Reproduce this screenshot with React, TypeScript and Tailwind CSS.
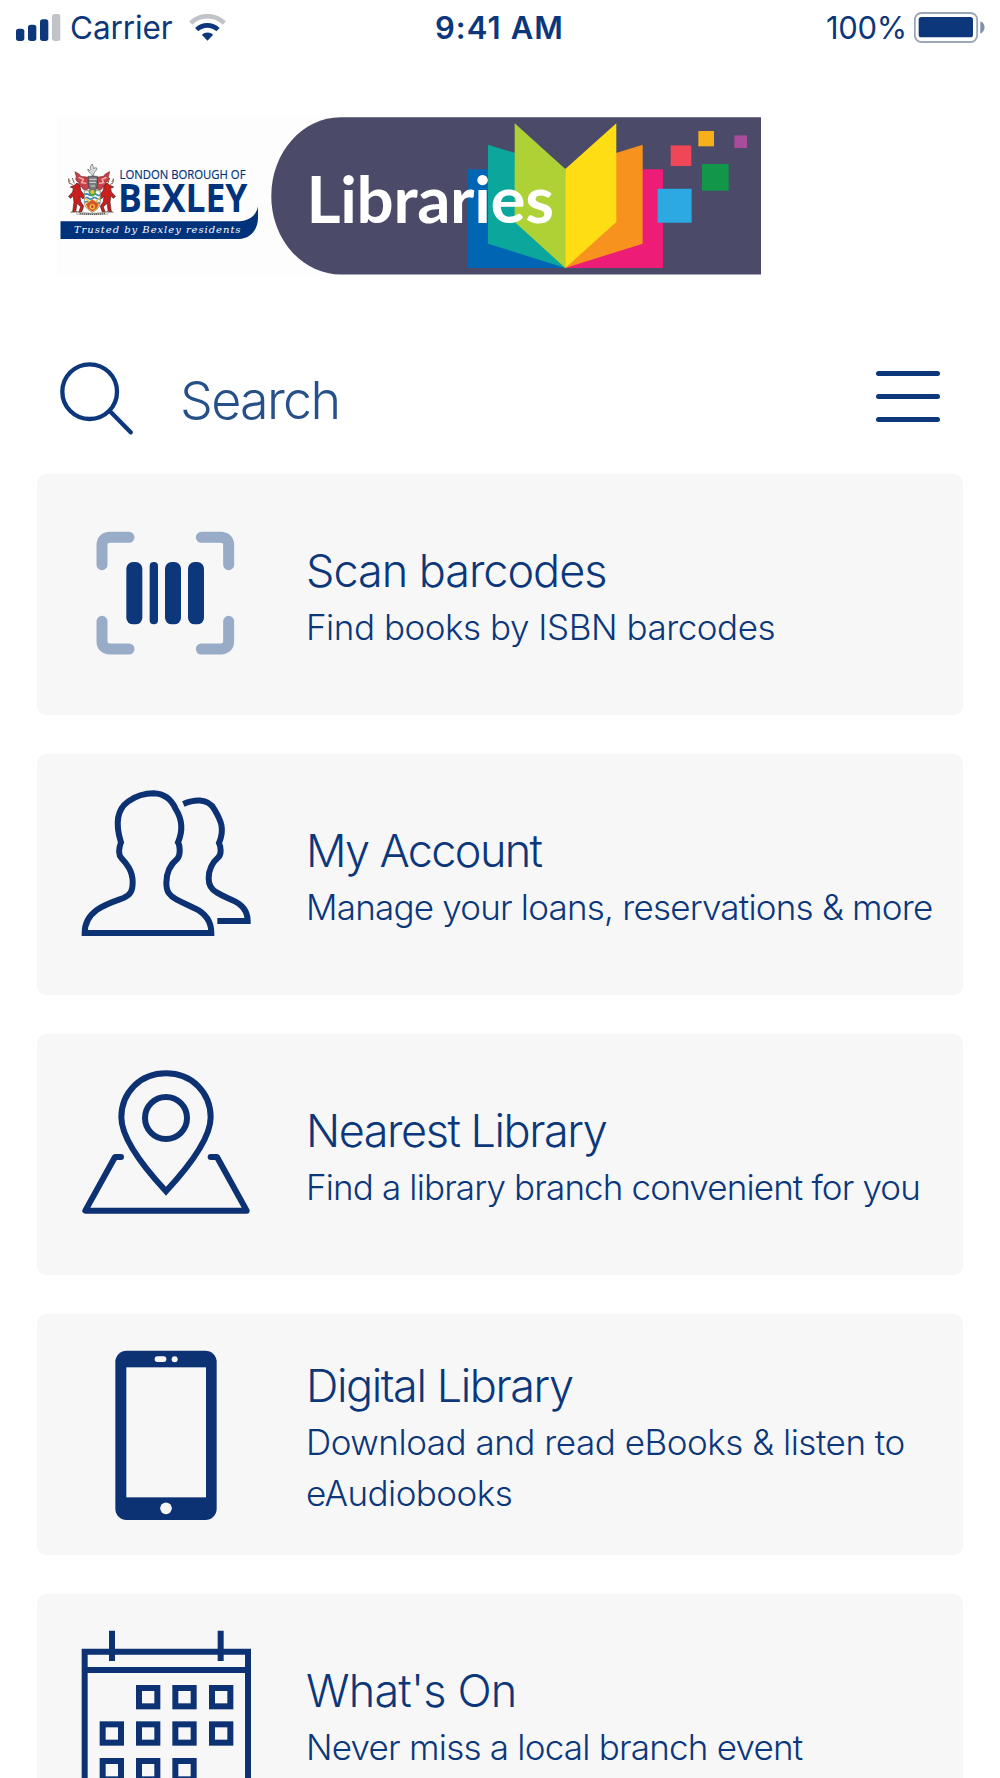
import type { ReactNode } from "react";

const NAVY = "#0c3274";

function SignalIcon() {
  return (
    <svg className="h-[27px] w-[45px]" viewBox="48 40 135 81" fill="#0c377b">
      <rect x="48" y="84" width="25" height="37" rx="8" />
      <rect x="84" y="72" width="25" height="49" rx="8" />
      <rect x="120" y="56" width="25" height="65" rx="8" />
      <rect x="156" y="40" width="25" height="81" rx="8" fill="#c0c4c9" />
    </svg>
  );
}

function WifiIcon() {
  return (
    <svg className="h-[27px] w-[37px]" viewBox="565 41 111 81" fill="none" strokeWidth="14">
      <path d="M570 68a73 73 0 0 1 101 0" stroke="#c0c4c9" />
      <path d="M588 88a46 46 0 0 1 64 0" stroke="#0c377b" />
      <path d="M620.500 121L603.500 103.500a24 24 0 0 1 34 0Z" fill="#0c377b" />
    </svg>
  );
}

function BatteryIcon() {
  return (
    <svg className="h-[31px] w-[71px]" viewBox="1243 36 213 93">
      <rect x="1245.500" y="39" width="187" height="87" rx="20" fill="none" stroke="#9ba6b8" strokeWidth="5.500" />
      <rect x="1257" y="51" width="163" height="61" rx="8" fill="#0c377b" />
      <path d="M1442 64c17 7 17 30 0 37Z" fill="#8491a8" />
    </svg>
  );
}

function StatusBar() {
  return (
    <header className="grid h-[54px] shrink-0 grid-cols-3 items-center pr-[15px] pl-4 font-['Inter',sans-serif] text-[31.500px] leading-[44px]">
      <div className="flex items-center">
        <SignalIcon />
        <span className="mt-[2px] ml-[9px] tracking-[-0.1px]">Carrier</span>
        <span className="ml-[16px]">
          <WifiIcon />
        </span>
      </div>
      <div className="mt-px pr-[2px] text-center text-[31px] font-semibold tracking-[1.1px]">9:41 AM</div>
      <div className="flex items-center justify-end">
        <span className="mt-px mr-[7px] text-[31px] tracking-[-0.3px]">100%</span>
        <BatteryIcon />
      </div>
    </header>
  );
}

function Crest() {
  return (
    <g transform="translate(40 100) scale(.33333)">
      {/* plume and helmet */}
      <path d="M157 228c-3-12-15-10-13-21 4 6 7 5 9 1-5-6 0-12 4-16 0 6 6 8 4 14 4-2 6-4 10-1-1 9-11 9-10 23Z" fill="#d9dadb" stroke="#55585c" strokeWidth="2" />
      {/* mantling */}
      <path d="M145 232c-14-3-22 1-27-9l-13-8 4 15c-5 8 2 17 9 17-6 7-1 14 8 13 0 9 9 11 20 6Zm26 0c14-3 19 1 24-9l14-8-4 15c5 8-2 17-9 17 6 7 1 14-8 13 0 9-9 11-19 6Z" fill="#c9414a" stroke="#712329" strokeWidth="2" />
      <path d="M116 232l14 6-5 10 14 2M200 232l-14 6 5 10-14 2" fill="none" stroke="#f2b8ae" strokeWidth="4" />
      <path d="M145 229h27v25l-5 17h-17l-5-17Z" fill="#77797d" stroke="#38393b" strokeWidth="2" />
      <path d="M148 238h22M149 247h19M152 258h13" stroke="#d8d9da" strokeWidth="3" />
      {/* supporters */}
      <path d="M103 256l8-7 9 9 2 13 12 16-5 10-9-8 2 16 9 14-6 17h-8l5-16-11-10-4 26h-9l4-29-2-19-9 7-5-6 12-13 2-11-9-4Z" fill="#c9201f" stroke="#48191a" strokeWidth="2" />
      <path d="M209 256l-8-7-9 9-2 13-12 16 5 10 9-8-2 16-9 14 6 17h8l-5-16 11-10 4 26h9l-4-29 2-19 9 7 5-6-12-13-2-11 9-4Z" fill="#c9201f" stroke="#48191a" strokeWidth="2" />
      <path d="M98 254l-11-5-1-14m5 9l-6-4m18 10l-6-16m112 20l10-5 1-14m-5 9l6-4m-17 10l5-16" fill="none" stroke="#75604a" strokeWidth="3" />
      <path d="M92 337l14-3 13 3m75 0l14-3 12 3" stroke="#7a4a35" strokeWidth="3" fill="none" />
      {/* shield */}
      <path d="M133 272h48v32c0 18-12 26-24 33-12-7-24-15-24-33Z" fill="#f8f8f4" stroke="#6b6046" strokeWidth="2" />
      <path d="M134 284q6-5 12 0t12 0 12 0 10 0M134 295q6-5 12 0t12 0 12 0 10 0M135 307q6-5 12 0t12 0 12 0 8 0" fill="none" stroke="#3387c0" strokeWidth="5" />
      <path d="M145 272h24l-4 13-8 5-9-5Z" fill="#4fa546" />
      <circle cx="157" cy="276" r="6" fill="#edc03b" />
      <path d="M135 293l22 22 22-22" fill="none" stroke="#eac349" strokeWidth="4" />
      <path d="M137 312l20-14 20 14-6 14-14 9-14-9Z" fill="#d6562c" stroke="#eac349" strokeWidth="2" />
      <circle cx="157" cy="320" r="6" fill="#d6372c" stroke="#f1c545" strokeWidth="4" />
      {/* motto scroll */}
      <path d="M108 333l3 10q46-6 92 0l3-10M115 336q42 9 84 0" fill="none" stroke="#8b8b87" strokeWidth="2" />
      <path d="M119 341q38 4 77 0" fill="none" stroke="#4d4d4b" strokeWidth="4" strokeDasharray="4 2" />
    </g>
  );
}

function Logo() {
  return (
    <svg className="h-[158px] w-[704px]" viewBox="57 117 704 158" aria-label="London Borough of Bexley Libraries">
      <rect x="57" y="117" width="704" height="157.500" fill="#fdfdfd" />
      <Crest />
      <g fill="#00337c">
        <text x="119.500" y="178.700" className="font-['Open_Sans',sans-serif] text-[13.400px]" textLength="126" lengthAdjust="spacingAndGlyphs" stroke="#00337c" strokeWidth=".2">
          LONDON BOROUGH OF
        </text>
        <text x="118" y="211.800" className="font-['Open_Sans',sans-serif] text-[39.500px] font-bold" textLength="129.500" lengthAdjust="spacingAndGlyphs">
          BEXLEY
        </text>
        <path d="M60.500 221.200H239C250 221 256.500 214.500 258 206.500V217.500C258 230 250 239 239 239H60.500Z" />
      </g>
      <text x="74" y="233.300" fill="#fff" className="font-['DejaVu_Serif',serif] text-[10px] italic" textLength="166.500">
        Trusted by Bexley residents
      </text>
      <path d="M341 117.300H761V274.500H341C302 274.500 271.300 239 271.300 195.900S302 117.300 341 117.300Z" fill="#4b4a68" />
      <g transform="translate(400 100) scale(.33333)">
        <path d="M203 208H496V504H203Z" fill="#0065b3" />
        <path d="M496 208H789V504H496Z" fill="#ed1c76" />
        <path d="M264 134L496 206V504L264 431Z" fill="#0ba79d" />
        <path d="M728 134L496 206V504L728 431Z" fill="#f7921e" />
        <path d="M344 70V366L496 504V207Z" fill="#aed136" />
        <path d="M649 70L496 207V504L649 366Z" fill="#ffdd15" />
        <path d="M812 136h62v62h-62Z" fill="#ef4758" />
        <path d="M895 93h47v46h-47Z" fill="#f8b01a" />
        <path d="M1003 106h38v38h-38Z" fill="#a84c9b" />
        <path d="M906 192h80v80h-80Z" fill="#11964a" />
        <path d="M773 266h102v102H773Z" fill="#2da9e2" />
      </g>
      <text x="306.500" y="222.500" fill="#fff" className="font-['Lato',sans-serif] text-[65.500px] font-bold" textLength="247.500">
        Libraries
      </text>
    </svg>
  );
}

function SearchIcon() {
  return (
    <svg className="size-[73px]" viewBox="90 65 219 219" fill="none" stroke="#0c377b" strokeWidth="13" strokeLinecap="round">
      <circle cx="179" cy="154" r="82" />
      <path d="M240 213l62 63" />
    </svg>
  );
}

function BarcodeIcon() {
  return (
    <svg className="size-[170px]" viewBox="63 27 510 510">
      <path
        d="M126 194V137Q126 112 151 112H207M424 112H481Q506 112 506 137V194M506 364V422Q506 447 481 447H424M207 447H151Q126 447 126 422V364"
        fill="none"
        stroke="#98abc7"
        strokeWidth="33"
        strokeLinecap="round"
      />
      <g fill="#0c377b">
        <rect x="199" y="186" width="48" height="187" rx="20" />
        <rect x="269" y="186" width="25" height="187" rx="12" />
        <rect x="315" y="186" width="48" height="187" rx="20" />
        <rect x="384" y="186" width="48" height="187" rx="20" />
      </g>
    </svg>
  );
}

function AccountIcon() {
  return (
    <svg className="size-[170px]" viewBox="63 57 510 510" fill="none" stroke={NAVY} strokeWidth="18">
      <path d="M74 489C74 420 145 400 190 384C212 375 218 362 218 336C218 300 197 278 184 264C175 254 176 236 183 217C165 160 171 118 205 94C228 78 254 70 281 70C314 71 334 88 347 117C366 147 371 178 354 217C360 226 362 254 353 265C335 280 319 305 319 338C319 367 330 378 349 388C371 400 386 406 404 415C434 429 454 452 454 489Z" />
      <path d="M370 102C400 89 443 82 463 118C483 152 495 177 477 219C484 233 484 253 475 262C459 276 446 297 446 325C446 350 456 360 470 367C486 377 499 382 516 390C545 402 563 423 563 453H472" />
    </svg>
  );
}

function LocationIcon() {
  return (
    <svg className="size-[170px]" viewBox="63 57 510 510" fill="none" stroke={NAVY} strokeWidth="18">
      <path d="M318 424C280 383 184 277 184 202C184 128 240 70 318 70S452 128 452 202C452 277 356 383 318 424Z" />
      <circle cx="318" cy="204" r="63" />
      <path d="M183 321H165L76 482H560L471 321H452" strokeLinecap="round" strokeLinejoin="round" />
    </svg>
  );
}

function PhoneIcon() {
  return (
    <svg className="h-[172px] w-[170px]" viewBox="63 57 510 516">
      <rect x="166" y="62" width="304" height="508" rx="34" fill={NAVY} />
      <g fill="#f7f7f7">
        <rect x="199" y="112" width="239" height="390" />
        <rect x="284" y="79" width="35" height="17" rx="8" />
        <circle cx="344" cy="87.500" r="9" />
        <circle cx="318" cy="535" r="17.500" />
      </g>
    </svg>
  );
}

const days = [
  [264, 321], [373, 321], [483, 321],
  [155, 430], [264, 430], [373, 430], [483, 430],
  [155, 540], [264, 540], [373, 540],
];

function CalendarIcon() {
  return (
    <svg className="size-[170px]" viewBox="63 117 510 510" fill="none" stroke={NAVY} strokeWidth="18">
      <path d="M74 185H564V660H74ZM74 240H564M156 122V213M482 122V213" />
      {days.map(([x, y]) => (
        <rect key={`${x}-${y}`} x={x - 27} y={y - 27} width="55" height="55" />
      ))}
    </svg>
  );
}

interface MenuItem {
  title: string;
  titleClass: string;
  lines: { text: string; className: string }[];
  icon: ReactNode;
}

const items: MenuItem[] = [
  {
    title: "Scan barcodes",
    titleClass: "tracking-[-1.03px]",
    lines: [{ text: "Find books by ISBN barcodes", className: "tracking-[-0.47px]" }],
    icon: <BarcodeIcon />,
  },
  {
    title: "My Account",
    titleClass: "tracking-[-1.65px]",
    lines: [{ text: "Manage your loans, reservations & more", className: "tracking-[-0.79px]" }],
    icon: <AccountIcon />,
  },
  {
    title: "Nearest Library",
    titleClass: "tracking-[-1.45px]",
    lines: [{ text: "Find a library branch convenient for you", className: "tracking-[-0.86px]" }],
    icon: <LocationIcon />,
  },
  {
    title: "Digital Library",
    titleClass: "tracking-[-1.42px]",
    lines: [
      { text: "Download and read eBooks & listen to", className: "tracking-[-0.48px]" },
      { text: "eAudiobooks", className: "tracking-[-0.57px]" },
    ],
    icon: <PhoneIcon />,
  },
  {
    title: "What's On",
    titleClass: "tracking-[-0.8px]",
    lines: [{ text: "Never miss a local branch event", className: "tracking-[-0.78px]" }],
    icon: <CalendarIcon />,
  },
];

function MenuCard({ item }: { item: MenuItem }) {
  return (
    <li className="flex h-[241px] shrink-0 items-center rounded-[9px] bg-[#f7f7f7] pl-[44px]">
      <div className="mt-[35px] self-start">{item.icon}</div>
      <div className="ml-[55px] pt-[3px] whitespace-nowrap">
        <h2 className={`text-[45px] leading-[63px] ${item.titleClass}`}>{item.title}</h2>
        {item.lines.map((line) => (
          <p key={line.text} className={`text-[35px] leading-[51px] ${line.className}`}>
            {line.text}
          </p>
        ))}
      </div>
    </li>
  );
}

export default function App() {
  return (
    <div className="flex h-[1778px] w-[1000px] flex-col overflow-hidden bg-white font-['Inter',sans-serif] text-[#0c377b]">
      <StatusBar />
      <div className="mt-[63px] ml-[57px] h-[158px] shrink-0">
        <Logo />
      </div>
      <div className="mt-[83px] flex h-20 shrink-0 items-center pr-[60px] pl-[60px]">
        <SearchIcon />
        <span className="mt-[6px] ml-[47px] text-[52px] leading-none font-light tracking-[-1.7px] text-[#265089]">Search</span>
        <button className="mb-[4px] ml-auto flex w-16 flex-col gap-[18px]" aria-label="Menu">
          <span className="h-[5px] w-full rounded-full bg-[#0c377b]" />
          <span className="h-[5px] w-full rounded-full bg-[#0c377b]" />
          <span className="h-[5px] w-full rounded-full bg-[#0c377b]" />
        </button>
      </div>
      <ul className="mt-9 flex flex-col gap-[39px] px-[37px] font-light">
        {items.map((item) => (
          <MenuCard key={item.title} item={item} />
        ))}
      </ul>
    </div>
  );
}
